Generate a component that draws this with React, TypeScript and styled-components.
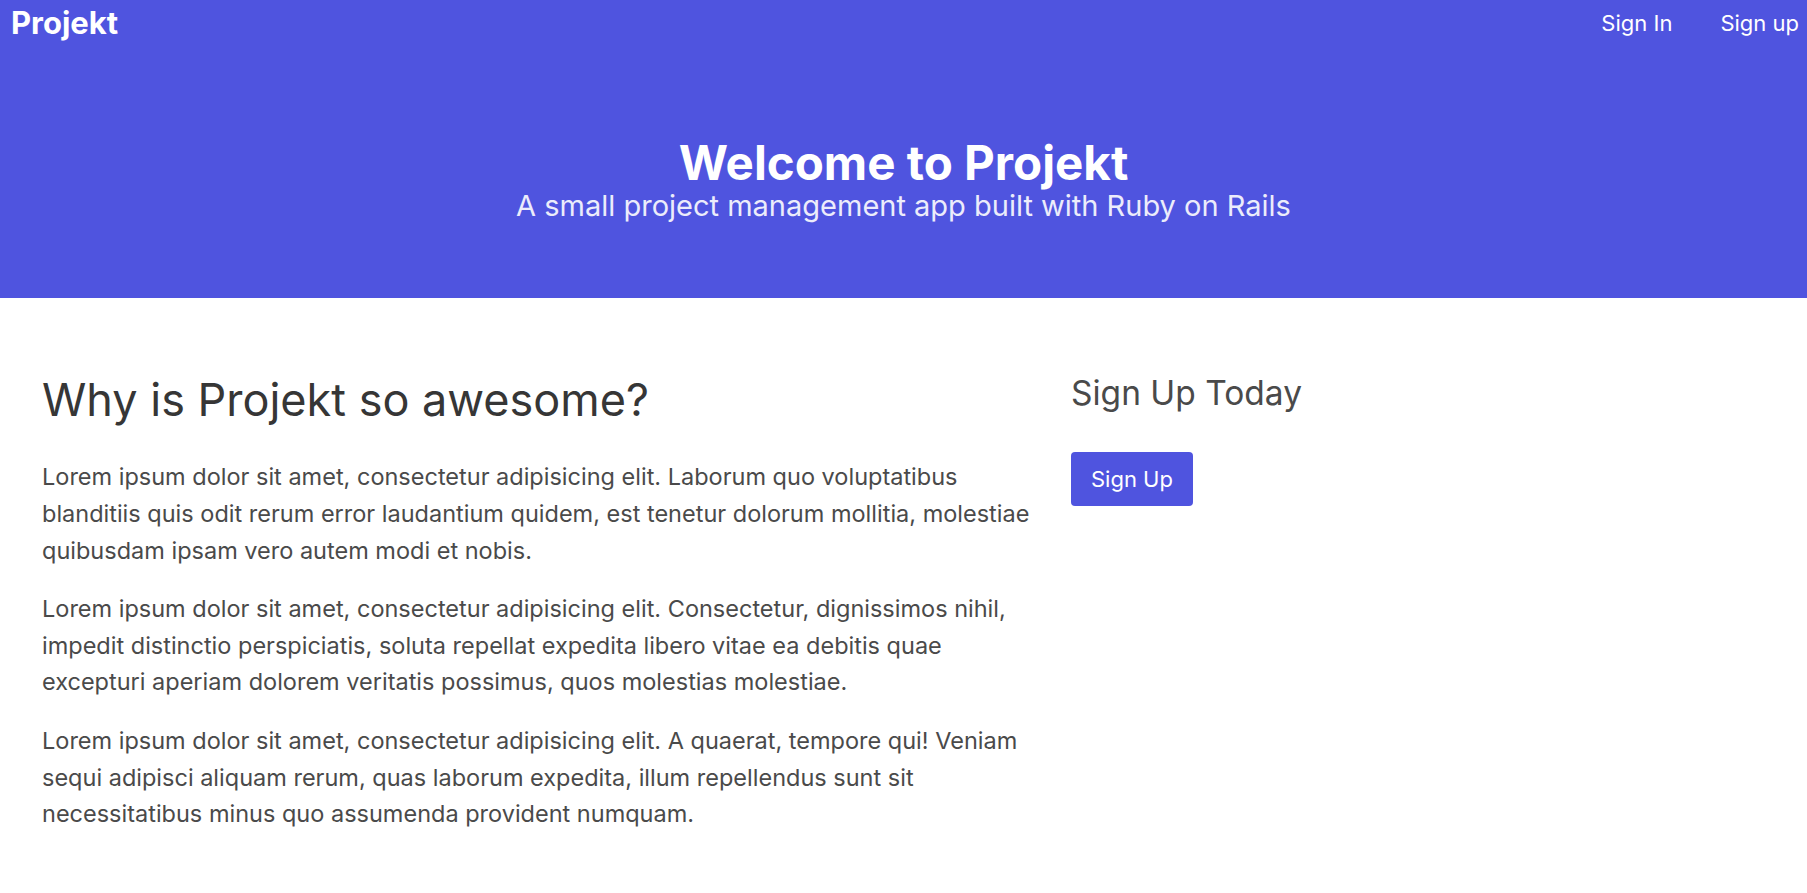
import React from "react";
import styled, { createGlobalStyle } from "styled-components";

const GlobalStyle = createGlobalStyle`
  html, body {
    margin: 0;
    padding: 0;
    background: #ffffff;
  }
  body {
    font-family: Inter, "Noto Sans", sans-serif;
    color: #4a4a4a;
  }
  * { box-sizing: border-box; }
`;

const BRAND = "#4f54df";

const Header = styled.header`
  background: ${BRAND};
  color: #ffffff;
`;

const Nav = styled.nav`
  display: flex;
  align-items: center;
  justify-content: space-between;
  padding: 5px 8px 0 11px;
`;

const Brand = styled.a`
  font-size: 31px;
  font-weight: 700;
  line-height: 36px;
  color: #ffffff;
  text-decoration: none;
`;

const NavLinks = styled.div`
  display: flex;
  align-items: center;
  gap: 48px;
`;

const NavLink = styled.a`
  font-size: 22px;
  line-height: 36px;
  color: #ffffff;
  text-decoration: none;
`;

const Hero = styled.div`
  padding: 95px 0 77px;
  text-align: center;
`;

const HeroTitle = styled.h1`
  margin: 0;
  font-size: 47.5px;
  font-weight: 700;
  line-height: 1.14;
  color: #ffffff;
`;

const HeroSubtitle = styled.p`
  margin: 0;
  font-size: 29px;
  line-height: 1.08;
  color: #ececfb;
`;

const Main = styled.main`
  display: grid;
  grid-template-columns: 1029px 1fr;
  padding: 75px 40px 40px 42px;
`;

const Column = styled.section`
  display: flex;
  flex-direction: column;
  align-items: flex-start;
  min-width: 0;
`;

const Heading = styled.h2`
  margin: 0 0 32px;
  font-size: 45px;
  font-weight: 400;
  line-height: 1.2;
  color: #363636;
`;

const Paragraph = styled.p`
  margin: 0 0 22px;
  max-width: 998px;
  font-size: 23.5px;
  line-height: 36.6px;
  color: #4a4a4a;
`;

const SideHeading = styled.h3`
  margin: 0 0 38px;
  font-size: 33.5px;
  font-weight: 400;
  line-height: 1.2;
  color: #4a4a4a;
`;

const Button = styled.a`
  display: inline-flex;
  align-items: center;
  justify-content: center;
  height: 54px;
  padding: 0 20px;
  border-radius: 4px;
  background: ${BRAND};
  color: #ffffff;
  font-size: 22px;
  text-decoration: none;
`;

const paragraphs = [
  "Lorem ipsum dolor sit amet, consectetur adipisicing elit. Laborum quo voluptatibus blanditiis quis odit rerum error laudantium quidem, est tenetur dolorum mollitia, molestiae quibusdam ipsam vero autem modi et nobis.",
  "Lorem ipsum dolor sit amet, consectetur adipisicing elit. Consectetur, dignissimos nihil, impedit distinctio perspiciatis, soluta repellat expedita libero vitae ea debitis quae excepturi aperiam dolorem veritatis possimus, quos molestias molestiae.",
  "Lorem ipsum dolor sit amet, consectetur adipisicing elit. A quaerat, tempore qui! Veniam sequi adipisci aliquam rerum, quas laborum expedita, illum repellendus sunt sit necessitatibus minus quo assumenda provident numquam.",
];

export default function App() {
  return (
    <>
      <GlobalStyle />
      <Header>
        <Nav>
          <Brand href="#">Projekt</Brand>
          <NavLinks>
            <NavLink href="#">Sign In</NavLink>
            <NavLink href="#">Sign up</NavLink>
          </NavLinks>
        </Nav>
        <Hero>
          <HeroTitle>Welcome to Projekt</HeroTitle>
          <HeroSubtitle>A small project management app built with Ruby on Rails</HeroSubtitle>
        </Hero>
      </Header>
      <Main>
        <Column>
          <Heading>Why is Projekt so awesome?</Heading>
          {paragraphs.map((p, i) => (
            <Paragraph key={i}>{p}</Paragraph>
          ))}
        </Column>
        <Column>
          <SideHeading>Sign Up Today</SideHeading>
          <Button href="#">Sign Up</Button>
        </Column>
      </Main>
    </>
  );
}
